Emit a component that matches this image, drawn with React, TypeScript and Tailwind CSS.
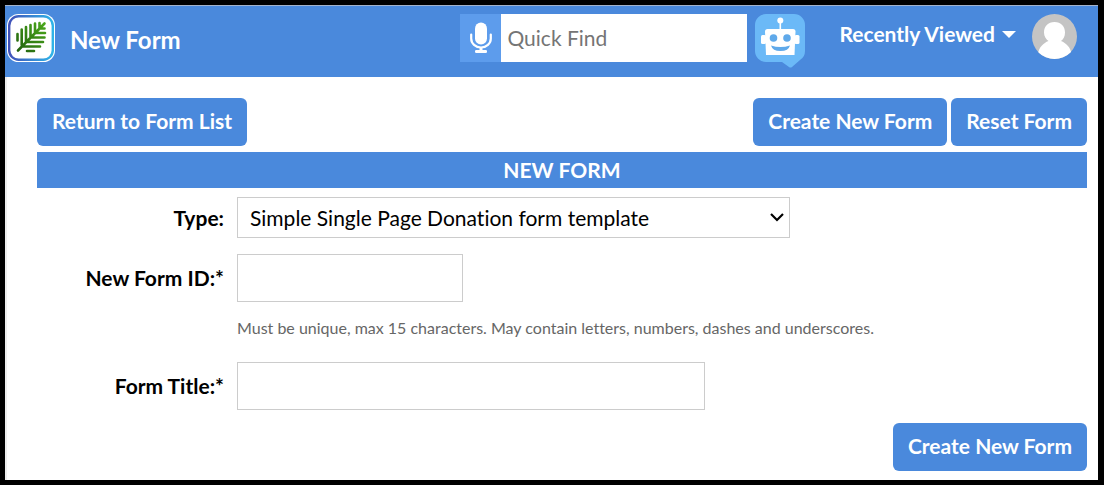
import type { ReactNode } from "react";

function LeafLogo() {
  return (
    <svg viewBox="0 0 48 48" className="size-12 shrink-0" role="img" aria-label="Home">
      <defs>
        <linearGradient id="ring" x1="0" y1="0" x2="1" y2="0">
          <stop offset="0" stopColor="#4150b8" />
          <stop offset="1" stopColor="#2fb4e8" />
        </linearGradient>
        <linearGradient id="leaf" gradientUnits="userSpaceOnUse" x1="11" y1="37" x2="38" y2="9">
          <stop offset="0" stopColor="#22620f" />
          <stop offset="1" stopColor="#4ba81c" />
        </linearGradient>
      </defs>
      <rect x="0" y="0" width="48" height="48" rx="11.5" fill="#fff" />
      <rect x="2.2" y="2.2" width="43.6" height="43.6" rx="9.5" fill="#fff" stroke="url(#ring)" strokeWidth="2.4" />
      <path
        d="M11 36.500L37.500 9.500M10.500 20v6.500M14.700 15.500v15.500M19 13v15M23.500 11v12.500M28 9.500v9.500M32.500 9v5.500M37.500 14.500h-5M38 19H28M37.500 23.500H23.500M36 28H19M33 32.500H15M20 37h7"
        stroke="url(#leaf)"
        strokeWidth="2.6"
        strokeLinecap="round"
        fill="none"
      />
    </svg>
  );
}

function Microphone() {
  return (
    <svg viewBox="0 0 22 32" className="h-8 w-[22px]" aria-hidden="true">
      <rect x="5" y="0.500" width="12" height="22" rx="6" fill="#fff" />
      <path d="M1.200 12.500v4a9.800 9 0 0 0 19.600 0v-4" stroke="#fff" strokeWidth="2.200" strokeLinecap="round" fill="none" />
      <path d="M9.500 25h3v3.500h-3z" fill="#fff" />
      <rect x="5" y="28" width="12" height="3" rx="1.200" fill="#fff" />
    </svg>
  );
}

function Robot() {
  return (
    <svg viewBox="0 0 50 54" className="h-[54px] w-[50px]" aria-hidden="true">
      <path
        d="M11 0h28a11 11 0 0 1 11 11v26q0 6-5 9l-8 7q-1.500 1.200-3 0l-7-5H11A11 11 0 0 1 0 37V11A11 11 0 0 1 11 0z"
        fill="#6bb9f7"
      />
      <circle cx="25.300" cy="6.500" r="3" fill="#fff" />
      <path d="M24.500 8h1.600v8h-1.600z" fill="#fff" />
      <rect x="6" y="21" width="5" height="9" rx="1.500" fill="#fff" />
      <rect x="39.500" y="21" width="5" height="9" rx="1.500" fill="#fff" />
      <path d="M12.500 15h25.500q2.500 0 2.500 2.500L39.500 41h-28.500L10 17.500q0-2.500 2.500-2.500z" fill="#fff" />
      <circle cx="18.500" cy="24" r="3.800" fill="#5fa9ea" />
      <circle cx="32" cy="24" r="3.800" fill="#5fa9ea" />
      <path d="M16 31.500q9.500 3 19 0q-1.500 5.500-9.500 5.500t-9.500-5.500z" fill="#5fa9ea" />
    </svg>
  );
}

function Avatar() {
  return (
    <svg viewBox="0 0 45 45" className="size-[45px]" aria-hidden="true">
      <defs>
        <clipPath id="disc">
          <circle cx="22.500" cy="22.500" r="22.500" />
        </clipPath>
      </defs>
      <g clipPath="url(#disc)">
        <rect width="45" height="45" fill="#c4c4c4" />
        <path d="M22.500 8c6.500 0 10.500 4.500 10.500 10.500 0 4-1.500 6.500-4 8.500 5 2 9.500 6 10.500 13v6H6v-6c1-7 5.500-11 10.500-13-2.500-2-4.500-4.500-4.500-8.500C12 12.500 16 8 22.500 8z" fill="#fff" />
      </g>
    </svg>
  );
}

function ActionButton({ children }: { children: ReactNode }) {
  return (
    <button type="button" className="h-12 rounded-md bg-[#4a89dc] px-[15px] pb-0.5 text-[21px] leading-7 font-bold whitespace-nowrap text-white">
      {children}
    </button>
  );
}

function FieldLabel({ htmlFor, children }: { htmlFor: string; children: ReactNode }) {
  return (
    <label htmlFor={htmlFor} className="text-right font-bold">
      {children}
    </label>
  );
}

export default function App() {
  return (
    <div className="bg-black py-[5px] pr-1.5 pl-[5px] font-['Lato',sans-serif] text-[21px] leading-7 text-black [font-variant-ligatures:none]">
      <header className="flex items-start border-t border-[#a3b3cc] bg-[#4a89dc] pt-2 pr-[21px] pb-[9px] pl-0.5 text-white">
        <a href="#home">
          <LeafLogo />
        </a>
        <h1 className="ml-[15px] flex h-[52px] items-center text-2xl font-bold">New Form</h1>
        <div className="ml-auto flex h-12">
          <button type="button" aria-label="Voice search" className="flex w-[41px] items-center justify-center bg-[#5d9cec]">
            <Microphone />
          </button>
          <input
            type="search"
            aria-label="Quick Find"
            placeholder="Quick Find"
            className="w-[246px] bg-white px-1.5 text-[21px] text-black outline-none placeholder:text-[#757575]"
          />
        </div>
        <button type="button" aria-label="Assistant" className="ml-2">
          <Robot />
        </button>
        <button type="button" className="ml-[34px] flex h-10 items-center gap-[7px] font-bold whitespace-nowrap">
          Recently Viewed
          <svg viewBox="0 0 14 7" className="h-[7px] w-3.5" aria-hidden="true">
            <path d="M0 0h14L7 7z" fill="#fff" />
          </svg>
        </button>
        <button type="button" aria-label="Account" className="ml-4">
          <Avatar />
        </button>
      </header>

      <main className="border-l-2 border-[#eee] bg-white pt-[21px] pr-[11px] pb-[9px] pl-[30px]">
        <div className="flex justify-between">
          <ActionButton>Return to Form List</ActionButton>
          <div className="flex gap-1">
            <ActionButton>Create New Form</ActionButton>
            <ActionButton>Reset Form</ActionButton>
          </div>
        </div>
        <h2 className="mt-1.5 bg-[#4a89dc] py-1 text-center font-bold text-white">NEW FORM</h2>

        <form className="mt-[9px]">
          <div className="grid grid-cols-[187px_1fr] items-center gap-x-[13px]">
            <FieldLabel htmlFor="type">Type:</FieldLabel>
            <div className="relative max-w-[553px]">
              <select id="type" className="block h-[41px] w-full appearance-none border border-[#ccc] bg-white px-3 text-[21px]">
                <option>Simple Single Page Donation form template</option>
              </select>
              <svg viewBox="0 0 14 9" className="pointer-events-none absolute top-4 right-1.5 h-[9px] w-3.5" aria-hidden="true">
                <path d="M1 1l6 6 6-6" stroke="#000" strokeWidth="2.200" fill="none" />
              </svg>
            </div>
          </div>
          <div className="mt-4 grid grid-cols-[187px_1fr] items-center gap-x-[13px]">
            <FieldLabel htmlFor="form-id">New Form ID:*</FieldLabel>
            <input id="form-id" maxLength={15} className="h-12 w-[226px] border border-[#ccc] px-3" />
            <p className="col-start-2 mt-3 text-base leading-7 text-[#666]">
              Must be unique, max 15 characters. May contain letters, numbers, dashes and underscores.
            </p>
          </div>
          <div className="mt-5 grid grid-cols-[187px_1fr] items-center gap-x-[13px]">
            <FieldLabel htmlFor="form-title">Form Title:*</FieldLabel>
            <input id="form-title" className="h-12 w-full max-w-[468px] border border-[#ccc] px-3" />
          </div>
          <div className="mt-[13px] flex justify-end">
            <ActionButton>Create New Form</ActionButton>
          </div>
        </form>
      </main>
    </div>
  );
}
